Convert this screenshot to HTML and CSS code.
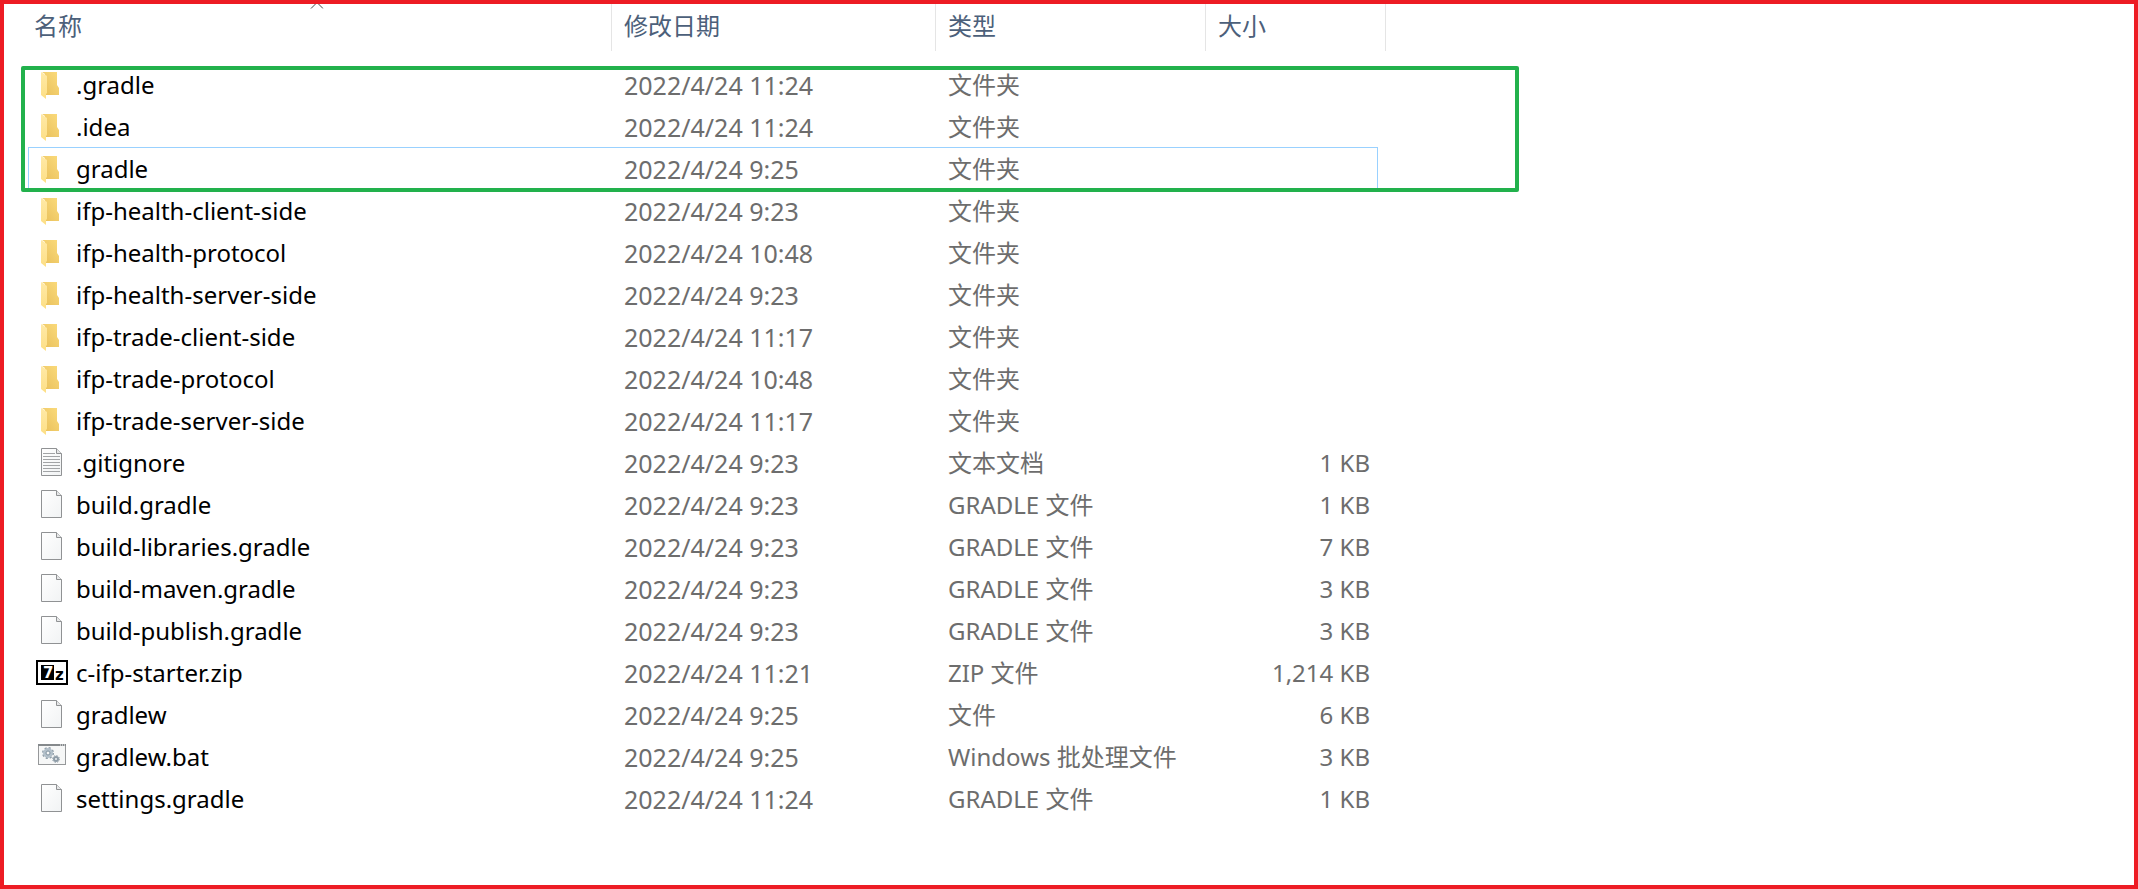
FILE: index.html
```
<!DOCTYPE html>
<html lang="zh-CN">
<head>
<meta charset="utf-8">
<title>文件列表</title>
<link rel="stylesheet" href="styles.css">
</head>
<body>
<svg class="defs" aria-hidden="true">
  <defs>
    <linearGradient id="back" x1="0" y1="1" x2="1" y2="0"><stop offset="0" stop-color="#e8bf5a"/><stop offset="1" stop-color="#fbdb7c"/></linearGradient>
    <linearGradient id="flap" x1="0" y1="0" x2="0" y2="1"><stop offset="0" stop-color="#ffe9a6"/><stop offset="1" stop-color="#fddf85"/></linearGradient>
    <linearGradient id="paper" x1="0" y1="0" x2="1" y2="1"><stop offset="0" stop-color="#ffffff"/><stop offset="1" stop-color="#f1f3f4"/></linearGradient>
    <symbol id="folder" class="shape" viewBox="0 0 32 28">
      <path d="M6 2H21V15L23 18V25H9V4Z" fill="url(#back)"/>
      <path d="M5 2L11 6V23L10 24V29L5 25Z" fill="url(#flap)"/>
    </symbol>
    <symbol id="file" class="shape" viewBox="0 0 32 28">
      <path d="M5.500 0.500H20.500L25.500 5.500V27.500H5.500Z" fill="url(#paper)" stroke="#909294"/>
      <path d="M20.500 0.500V5.500H25.500" fill="#e6e7e8" stroke="#909294"/>
    </symbol>
    <symbol id="text" class="shape" viewBox="0 0 32 28">
      <path d="M5.500 0.500H20.500L25.500 5.500V27.500H5.500Z" fill="url(#paper)" stroke="#909294"/>
      <path d="M20.500 0.500V5.500H25.500" fill="#e6e7e8" stroke="#909294"/>
      <path d="M7 5.500H19M7 8.500H24M7 11.500H24M7 14.500H24M7 17.500H24M7 20.500H24M7 23.500H24" stroke="#a2a4a6"/>
    </symbol>
    <symbol id="zip" class="shape" viewBox="0 0 32 28">
      <rect x="1" y="3" width="30" height="23" fill="#fff" stroke="#000" stroke-width="2"/>
      <rect x="5" y="7" width="13" height="15" fill="#000"/>
      <text class="zip-seven" x="7" y="20">7</text>
      <text class="zip-z" x="19" y="22">z</text>
    </symbol>
    <symbol id="bat" class="shape" viewBox="0 0 32 28">
      <rect x="2.500" y="2.500" width="27" height="20" fill="#f6f7f7" stroke="#96989a"/>
      <path d="M2 3H30" stroke="#85898c" stroke-width="2"/>
      <path d="M24 3H25M26 3H27M28 3H29" stroke="#fff"/>
      <circle cx="12" cy="11" r="5" fill="none" stroke="#8d9ba6" stroke-width="2" stroke-dasharray="2 1.930"/>
      <circle cx="12" cy="11" r="3.500" fill="#e9eef1" stroke="#b3c0ca" stroke-width="3"/>
      <circle cx="12" cy="11" r="2" fill="#f6f7f7" stroke="#7f909d"/>
      <circle cx="20" cy="17" r="3.400" fill="none" stroke="#8d9ba6" stroke-dasharray="1.400 1.270"/>
      <circle cx="20" cy="17" r="2" fill="#eef1f3" stroke="#8e9ca7" stroke-width="2"/>
    </symbol>
  </defs>
</svg>
<main class="window">
  <table class="files">
    <colgroup><col class="c-name"><col class="c-date"><col class="c-type"><col class="c-size"></colgroup>
    <thead>
      <tr>
        <th scope="col"><div class="head">名称<svg class="sort" viewBox="0 0 14 8" aria-hidden="true"><path d="M1 7.500L7 1.500L13 7.500" fill="none" stroke="#444"/></svg></div></th>
        <th scope="col"><div class="head">修改日期</div></th>
        <th scope="col"><div class="head">类型</div></th>
        <th scope="col"><div class="head">大小</div></th>
      </tr>
    </thead>
    <tbody>
      <tr><td><div class="name"><svg class="icon"><use href="#folder"/></svg>.gradle</div></td><td class="date">2022/4/24 11:24</td><td>文件夹</td><td></td></tr>
      <tr><td><div class="name"><svg class="icon"><use href="#folder"/></svg>.idea</div></td><td class="date">2022/4/24 11:24</td><td>文件夹</td><td></td></tr>
      <tr class="focused"><td><div class="name"><svg class="icon"><use href="#folder"/></svg>gradle</div></td><td class="date">2022/4/24 9:25</td><td>文件夹</td><td></td></tr>
      <tr><td><div class="name"><svg class="icon"><use href="#folder"/></svg>ifp-health-client-side</div></td><td class="date">2022/4/24 9:23</td><td>文件夹</td><td></td></tr>
      <tr><td><div class="name"><svg class="icon"><use href="#folder"/></svg>ifp-health-protocol</div></td><td class="date">2022/4/24 10:48</td><td>文件夹</td><td></td></tr>
      <tr><td><div class="name"><svg class="icon"><use href="#folder"/></svg>ifp-health-server-side</div></td><td class="date">2022/4/24 9:23</td><td>文件夹</td><td></td></tr>
      <tr><td><div class="name"><svg class="icon"><use href="#folder"/></svg>ifp-trade-client-side</div></td><td class="date">2022/4/24 11:17</td><td>文件夹</td><td></td></tr>
      <tr><td><div class="name"><svg class="icon"><use href="#folder"/></svg>ifp-trade-protocol</div></td><td class="date">2022/4/24 10:48</td><td>文件夹</td><td></td></tr>
      <tr><td><div class="name"><svg class="icon"><use href="#folder"/></svg>ifp-trade-server-side</div></td><td class="date">2022/4/24 11:17</td><td>文件夹</td><td></td></tr>
      <tr><td><div class="name"><svg class="icon"><use href="#text"/></svg>.gitignore</div></td><td class="date">2022/4/24 9:23</td><td>文本文档</td><td>1 KB</td></tr>
      <tr><td><div class="name"><svg class="icon"><use href="#file"/></svg>build.gradle</div></td><td class="date">2022/4/24 9:23</td><td>GRADLE 文件</td><td>1 KB</td></tr>
      <tr><td><div class="name"><svg class="icon"><use href="#file"/></svg>build-libraries.gradle</div></td><td class="date">2022/4/24 9:23</td><td>GRADLE 文件</td><td>7 KB</td></tr>
      <tr><td><div class="name"><svg class="icon"><use href="#file"/></svg>build-maven.gradle</div></td><td class="date">2022/4/24 9:23</td><td>GRADLE 文件</td><td>3 KB</td></tr>
      <tr><td><div class="name"><svg class="icon"><use href="#file"/></svg>build-publish.gradle</div></td><td class="date">2022/4/24 9:23</td><td>GRADLE 文件</td><td>3 KB</td></tr>
      <tr><td><div class="name"><svg class="icon"><use href="#zip"/></svg>c-ifp-starter.zip</div></td><td class="date">2022/4/24 11:21</td><td>ZIP 文件</td><td>1,214 KB</td></tr>
      <tr><td><div class="name"><svg class="icon"><use href="#file"/></svg>gradlew</div></td><td class="date">2022/4/24 9:25</td><td>文件</td><td>6 KB</td></tr>
      <tr><td><div class="name"><svg class="icon"><use href="#bat"/></svg>gradlew.bat</div></td><td class="date">2022/4/24 9:25</td><td>Windows 批处理文件</td><td>3 KB</td></tr>
      <tr><td><div class="name"><svg class="icon"><use href="#file"/></svg>settings.gradle</div></td><td class="date">2022/4/24 11:24</td><td>GRADLE 文件</td><td>1 KB</td></tr>
    </tbody>
  </table>
  <div class="highlight"></div>
</main>
</body>
</html>
```
FILE: styles.css
```
* { box-sizing: border-box; }

body {
  margin: 0;
  background: #fff;
  font: 24px/32px "Noto Sans", "Noto Sans CJK SC", sans-serif;
}

.defs { position: absolute; width: 0; height: 0; }
.shape { overflow: visible; }

.window {
  position: relative;
  min-height: 100vh;
  padding: 0 18px;
  border: 4px solid #ed1c24;
}

.files {
  table-layout: fixed;
  width: 1364px;
  border-collapse: collapse;
  color: #6d6d6d;
}

.c-name { width: 590px; }
.c-date { width: 324px; }
.c-type { width: 270px; }
.c-size { width: 180px; }

th {
  height: 59px;
  padding: 0;
  vertical-align: top;
  text-align: left;
  font-weight: 400;
  color: #4c607a;
}

.head {
  position: relative;
  height: 47px;
  padding: 6px 12px 0;
  border-right: 1px solid #e5e5e5;
}

.sort {
  position: absolute;
  top: -3px;
  left: 0;
  right: 0;
  width: 14px;
  height: 8px;
  margin: 0 auto;
  clip-path: inset(3px 0 0 0);
}

td {
  height: 42px;
  padding: 2px 12px 0;
  white-space: nowrap;
}

td:first-child { padding-left: 14px; color: #000; }
td:last-child { padding-right: 16px; text-align: right; }

.date { font-size: 25px; }

.name { display: flex; align-items: center; gap: 8px; }

.icon { flex: none; width: 32px; height: 28px; margin-bottom: 2px; overflow: visible; }
.zip-seven { font: bold 15px "DejaVu Sans", sans-serif; fill: #fff; }
.zip-z { font: bold 15px "DejaVu Sans", sans-serif; fill: #000; }

.focused { position: relative; }
.focused::after {
  content: "";
  position: absolute;
  inset: 0 8px 0 6px;
  border: 1px solid #99d1ff;
}

.highlight {
  position: absolute;
  top: 62px;
  left: 17px;
  width: 1498px;
  height: 126px;
  border: 4px solid #22b14c;
  border-radius: 2px;
}
```
